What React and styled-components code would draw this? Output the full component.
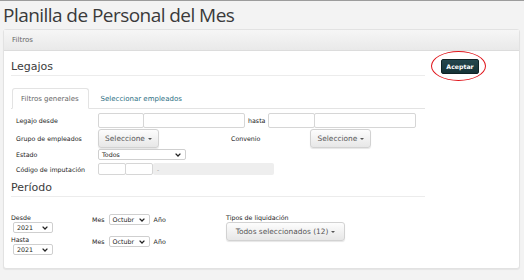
import React from "react";
import styled, { createGlobalStyle } from "styled-components";

const GlobalStyle = createGlobalStyle`
  html, body {
    margin: 0;
    padding: 0;
    background: #f3f3f3;
  }
  body {
    border-top: 1px solid #9c9c9c;
    font-family: "DejaVu Sans", Verdana, sans-serif;
    color: #333;
  }
`;

const Page = styled.div`
  width: 524px;
  height: 279px;
  overflow: hidden;
`;

const Title = styled.h1`
  margin: 0;
  padding-left: 3px;
  height: 28px;
  font-family: "Open Sans", sans-serif;
  font-weight: 400;
  font-size: 19px;
  line-height: 28px;
  color: #3a3a3a;
  letter-spacing: -0.55px;
`;

const Panel = styled.section`
  margin: 0 4px 0 3px;
  background: #fff;
  border: 1px solid #e2e2e2;
  border-radius: 3px;
  box-shadow: 0 1px 1px rgba(0, 0, 0, 0.06);
`;

const PanelHeader = styled.div`
  height: 20px;
  padding-left: 8px;
  display: flex;
  align-items: center;
  background: linear-gradient(#f6f6f6, #e9e9e9);
  border-bottom: 1px solid #dcdcdc;
  font-size: 7px;
  color: #666;
`;

const PanelBody = styled.div`
  display: flex;
  padding: 8px 0 13px 7px;
`;

const Main = styled.div`
  width: 414px;
`;

const Side = styled.div`
  padding: 0 0 0 16px;
`;

const SectionTitle = styled.h2`
  margin: 0;
  height: 16px;
  line-height: 16px;
  font-family: "DejaVu Sans", sans-serif;
  font-weight: 400;
  font-size: 11px;
  color: #3c3c3c;
  border-bottom: 1px solid #ececec;
  margin-top: ${(p) => p.$top || 0}px;
`;

const TabBar = styled.div`
  display: flex;
  margin-top: 12px;
  padding-left: 1px;
  height: 20px;
  border-bottom: 1px solid #e3e3e3;
`;

const Tab = styled.div`
  box-sizing: border-box;
  padding: 0 9px 0 8px;
  display: flex;
  align-items: center;
  font-size: 7px;
  color: ${(p) => (p.$active ? "#666" : "#2b6e82")};
  background: ${(p) => (p.$active ? "#fff" : "transparent")};
  border: 1px solid ${(p) => (p.$active ? "#e3e3e3" : "transparent")};
  border-bottom-color: ${(p) => (p.$active ? "#fff" : "transparent")};
  border-radius: 3px 3px 0 0;
  margin-right: ${(p) => (p.$active ? 3 : 0)}px;
  margin-bottom: -1px;
  height: 21px;
`;

const Form = styled.div`
  padding: 4px 0 0 5px;
  display: flex;
  flex-direction: column;
`;

const Row = styled.div`
  display: flex;
  align-items: center;
  margin-top: ${(p) => p.$top || 0}px;
`;

const Label = styled.span`
  width: ${(p) => (p.$w ? `${p.$w}px` : "auto")};
  flex-shrink: 0;
  font-size: 6.3px;
  color: #222;
  margin-left: ${(p) => p.$ml || 0}px;
`;

const Input = styled.div`
  width: ${(p) => p.$w}px;
  height: ${(p) => p.$h || 15}px;
  box-sizing: border-box;
  border: 1px solid #d6d6d6;
  border-radius: 2px;
  background: #fff;
  margin-left: ${(p) => p.$ml || 0}px;
  & + & {
    margin-left: -1px;
  }
`;

const DropButton = styled.div`
  width: ${(p) => p.$w}px;
  height: 19px;
  box-sizing: border-box;
  margin-left: ${(p) => p.$ml || 0}px;
  display: flex;
  align-items: center;
  justify-content: center;
  gap: 3px;
  font-size: 7.4px;
  color: #555;
  background: linear-gradient(#fdfdfd, #e7e7e7);
  border: 1px solid #d2d2d2;
  border-radius: 3px;
  box-shadow: 0 1px 1px rgba(0, 0, 0, 0.1);
`;

const Caret = styled.span`
  width: 0;
  height: 0;
  border-left: 2px solid transparent;
  border-right: 2px solid transparent;
  border-top: 2.5px solid #555;
`;

const SelectBox = styled.div`
  width: ${(p) => p.$w}px;
  height: ${(p) => p.$h || 11}px;
  box-sizing: border-box;
  margin-left: ${(p) => p.$ml || 0}px;
  padding: 0 4px 0 3px;
  display: flex;
  align-items: center;
  justify-content: space-between;
  font-size: 6.3px;
  color: #222;
  background: #fff;
  border: 1px solid #cfcfcf;
  border-radius: 2px;
`;

const ReadOnly = styled.div`
  width: 121px;
  height: 12px;
  box-sizing: border-box;
  padding-left: 4px;
  display: flex;
  align-items: center;
  background: #eee;
  border-radius: 2px;
  font-size: 6px;
  color: #999;
`;

const Periodo = styled.div`
  display: flex;
  margin-top: 17px;
`;

const Dates = styled.div`
  width: 215px;
  display: flex;
  flex-direction: column;
  gap: 3px;
`;

const DateBlock = styled.div`
  display: flex;
  align-items: flex-start;
`;

const YearCol = styled.div`
  width: 81px;
  display: flex;
  flex-direction: column;
  gap: 1px;
`;

const MonthRow = styled.div`
  display: flex;
  align-items: center;
  gap: 4px;
`;

const Tipos = styled.div`
  display: flex;
  flex-direction: column;
  gap: 1px;
`;

const AcceptWrap = styled.div`
  position: relative;
`;

const AcceptButton = styled.button`
  display: block;
  width: 38px;
  height: 15px;
  padding: 0;
  font-family: "DejaVu Sans", sans-serif;
  font-size: 6.2px;
  font-weight: 700;
  color: #fff;
  background: linear-gradient(#24474e, #163236);
  border: 1px solid #0f2326;
  border-radius: 2px;
`;

const Highlight = styled.div`
  position: absolute;
  left: -10px;
  top: -8px;
  width: 55px;
  height: 30px;
  box-sizing: border-box;
  border: 1px solid #e0151b;
  border-radius: 50%;
`;

function Chevron() {
  return (
    <svg width="6" height="4" viewBox="0 0 6 4">
      <path d="M0.6 0.6 L3 3 L5.4 0.6" fill="none" stroke="#222" strokeWidth="1.3" />
    </svg>
  );
}

function Select({ value, ...rest }) {
  return (
    <SelectBox {...rest}>
      <span>{value}</span>
      <Chevron />
    </SelectBox>
  );
}

export default function App() {
  return (
    <Page>
      <GlobalStyle />
      <Title>Planilla de Personal del Mes</Title>
      <Panel>
        <PanelHeader>Filtros</PanelHeader>
        <PanelBody>
          <Main>
            <SectionTitle>Legajos</SectionTitle>
            <TabBar>
              <Tab $active>Filtros generales</Tab>
              <Tab>Seleccionar empleados</Tab>
            </TabBar>
            <Form>
              <Row>
                <Label $w={82}>Legajo desde</Label>
                <Input $w={46} />
                <Input $w={102} />
                <Label $ml={3}>hasta</Label>
                <Input $w={47} $ml={3} />
                <Input $w={102} />
              </Row>
              <Row $top={1}>
                <Label $w={82}>Grupo de empleados</Label>
                <DropButton $w={61}>
                  Seleccione <Caret />
                </DropButton>
                <Label $ml={72}>Convenio</Label>
                <DropButton $w={61} $ml={50}>
                  Seleccione <Caret />
                </DropButton>
              </Row>
              <Row $top={1}>
                <Label $w={82}>Estado</Label>
                <Select $w={88} value="Todos" />
              </Row>
              <Row $top={3}>
                <Label $w={82}>Código de imputación</Label>
                <Input $w={28} $h={12} />
                <Input $w={28} $h={12} />
                <ReadOnly>-</ReadOnly>
              </Row>
            </Form>
            <SectionTitle $top={5}>Período</SectionTitle>
            <Periodo>
              <Dates>
                <DateBlock>
                  <YearCol>
                    <Label>Desde</Label>
                    <Select $w={40} $ml={2} value="2021" />
                  </YearCol>
                  <MonthRow>
                    <Label>Mes</Label>
                    <Select $w={41} value="Octubr" />
                    <Label>Año</Label>
                  </MonthRow>
                </DateBlock>
                <DateBlock>
                  <YearCol>
                    <Label>Hasta</Label>
                    <Select $w={40} $ml={2} value="2021" />
                  </YearCol>
                  <MonthRow>
                    <Label>Mes</Label>
                    <Select $w={41} value="Octubr" />
                    <Label>Año</Label>
                  </MonthRow>
                </DateBlock>
              </Dates>
              <Tipos>
                <Label>Tipos de liquidación</Label>
                <DropButton $w={119}>
                  Todos seleccionados (12) <Caret />
                </DropButton>
              </Tipos>
            </Periodo>
          </Main>
          <Side>
            <AcceptWrap>
              <AcceptButton>Aceptar</AcceptButton>
              <Highlight />
            </AcceptWrap>
          </Side>
        </PanelBody>
      </Panel>
    </Page>
  );
}
